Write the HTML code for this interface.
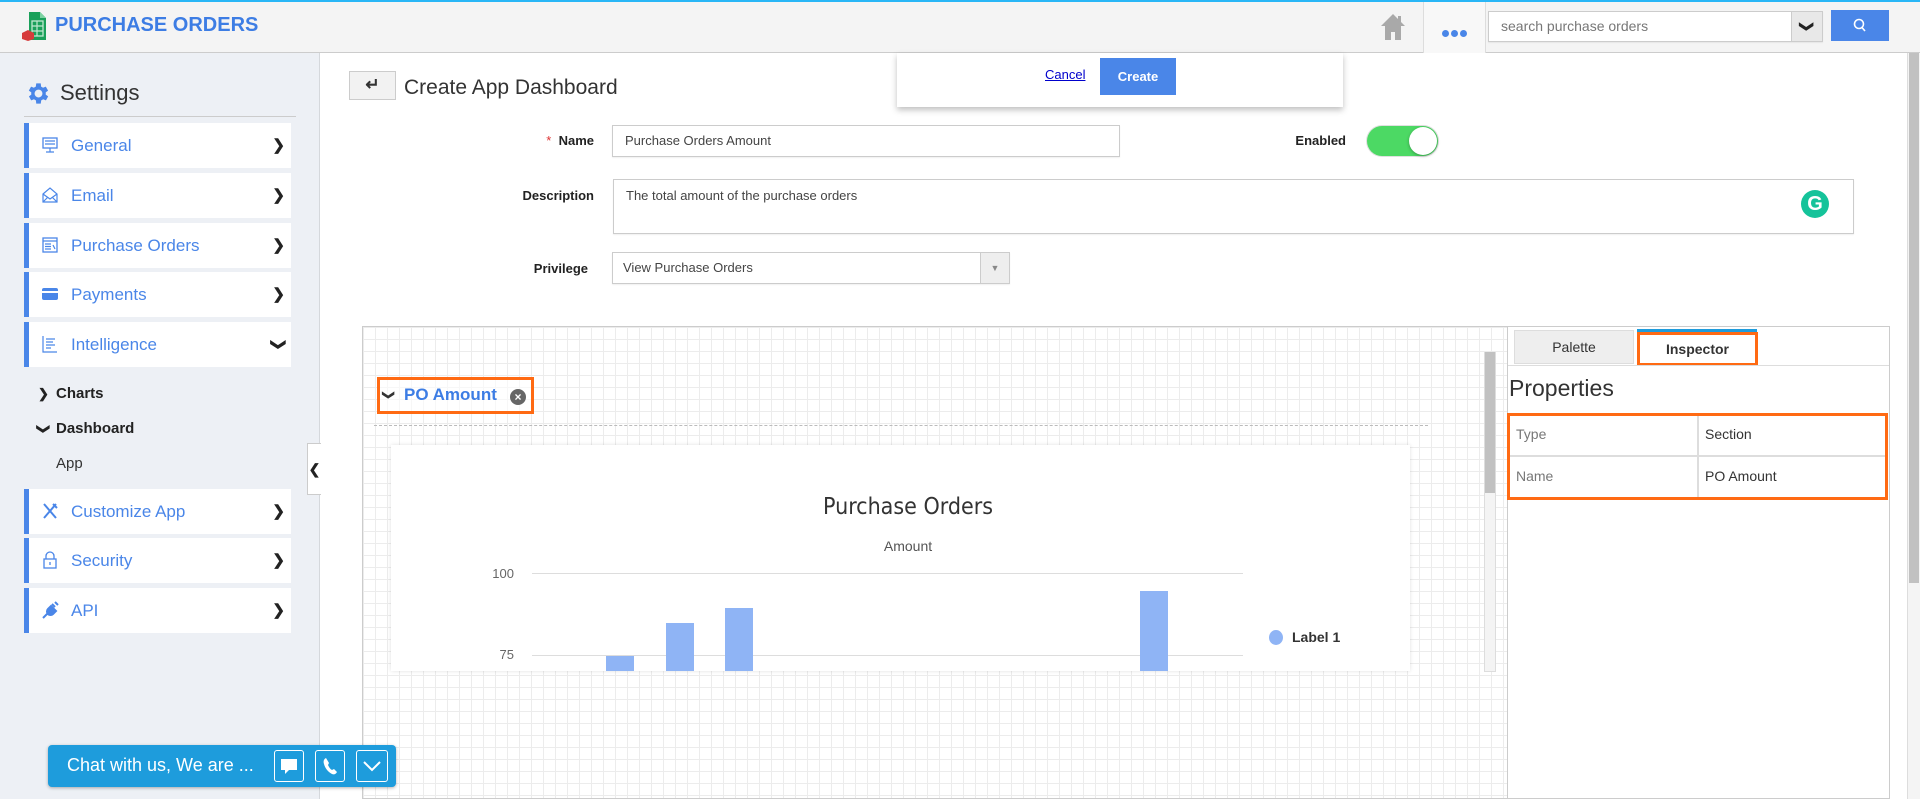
<!DOCTYPE html>
<html><head><meta charset="utf-8"><style>
*{box-sizing:border-box;margin:0;padding:0}
body{width:1920px;height:799px;overflow:hidden;font-family:"Liberation Sans",Arial,sans-serif;background:#fff;position:relative;color:#333}
.a{position:absolute}
.hdr{left:0;top:0;width:1920px;height:53px;background:#f4f4f4;border-top:2px solid #29b6f6;border-bottom:1px solid #ccc}
.side{left:0;top:53px;width:320px;height:746px;background:#edf0f5;border-right:1px solid #d5d8dc}
.mi{left:24px;width:267px;height:45px;background:#fff;border-left:5px solid #4a86e8;color:#4a86e8;font-size:17px;line-height:45px;padding-left:42px}
.mi .ic{position:absolute;left:12px;top:13px;width:18px;height:18px}
.mi .ch{position:absolute;right:6px;top:0;color:#222;font-size:15px;font-weight:bold}
.lbl{font-size:13px;font-weight:bold;color:#222;text-align:right}
.inp{border:1px solid #ccc;background:#fff;font-size:13px;color:#444;padding-left:12px;box-shadow:0 1px 1px rgba(0,0,0,.06)}
.grid{background-color:#fff;background-image:linear-gradient(#ececec 1px,transparent 1px),linear-gradient(90deg,#ececec 1px,transparent 1px);background-size:12px 12px}
.dn{display:inline-block;transform:rotate(90deg)}
</style></head><body>
<div class="a hdr">
 <svg class="a" style="left:20px;top:9px" width="28" height="30" viewBox="0 0 28 30"><path d="M9 1h11l6 6v22H9z" fill="#1aa05a"/><path d="M20 1v6h6" fill="#7ed3a3"/><rect x="12" y="10" width="11" height="15" fill="none" stroke="#bfe8cf" stroke-width="1.3"/><path d="M12 15h11M12 20h11M17 10v15" stroke="#bfe8cf" stroke-width="1.2"/><path d="M2 22l6-3 6 3v6l-6 2-6-2z" fill="#d63b3b"/></svg>
 <div class="a" style="left:55px;top:12px;font-size:20px;font-weight:bold;color:#3d7de4">PURCHASE ORDERS</div>
 <svg class="a" style="left:1380px;top:11px" width="26" height="28" viewBox="0 0 26 28"><path d="M13 1L1 13h4v14h6v-8h4v8h6V13h4z" fill="#a9a9a9"/><rect x="18" y="3" width="3" height="6" fill="#a9a9a9"/></svg>
 <div class="a" style="left:1423px;top:0;width:1px;height:51px;background:#ddd"></div>
 <div class="a" style="left:1424px;top:0;width:61px;height:51px;background:#f8f8f8"></div>
 <div class="a" style="left:1485px;top:0;width:1px;height:51px;background:#ddd"></div>
 <div class="a" style="left:1442px;top:22px"><span style="display:inline-block;width:7px;height:7px;border-radius:50%;background:#4a86e8;margin-right:2px"></span><span style="display:inline-block;width:7px;height:7px;border-radius:50%;background:#4a86e8;margin-right:2px"></span><span style="display:inline-block;width:7px;height:7px;border-radius:50%;background:#4a86e8"></span></div>
 <div class="a inp" style="left:1488px;top:9px;width:335px;height:31px;line-height:29px;color:#777;font-size:14px">search purchase orders</div>
 <div class="a" style="left:1791px;top:10px;width:31px;height:29px;background:#e8e8e8;border-left:1px solid #ccc;text-align:center;line-height:29px;font-size:14px;font-weight:bold;color:#222"><span class="dn">&#10095;</span></div>
 <div class="a" style="left:1831px;top:8px;width:58px;height:31px;background:#4a86e8"><svg style="margin:8px 0 0 22px" width="14" height="15" viewBox="0 0 14 15"><circle cx="6" cy="6" r="4.5" fill="none" stroke="#fff" stroke-width="1.6"/><path d="M9 9.5l3 3.5" stroke="#fff" stroke-width="1.6"/></svg></div>
</div>
<div class="a side">
 <svg class="a" style="left:25px;top:27px" width="27" height="27" viewBox="0 0 24 24"><path fill="#4a86e8" d="M19.4 13a7.5 7.5 0 000-2l2.1-1.6-2-3.5-2.5 1a7 7 0 00-1.7-1L15 3h-4l-.4 2.9a7 7 0 00-1.7 1l-2.5-1-2 3.5L6.6 11a7.5 7.5 0 000 2l-2.1 1.6 2 3.5 2.5-1a7 7 0 001.7 1L11 21h4l.4-2.9a7 7 0 001.7-1l2.5 1 2-3.5zM13 15.5a3.5 3.5 0 110-7 3.5 3.5 0 010 7z" transform="translate(-1 0)"/></svg>
 <div class="a" style="left:60px;top:27px;font-size:22px;color:#333">Settings</div>
 <div class="a" style="left:24px;top:63px;width:272px;height:1px;background:#ccc"></div>
</div>
<div class="a mi" style="top:123px"><svg class="ic" viewBox="0 0 18 18"><rect x="2" y="2" width="14" height="10" fill="none" stroke="#4a86e8" stroke-width="1.3"/><path d="M4 5h10M4 8h10M9 12v4M5 16h8" stroke="#4a86e8" stroke-width="1.2"/></svg>General<span class="ch">&#10095;</span></div>
<div class="a mi" style="top:173px"><svg class="ic" viewBox="0 0 18 18"><path d="M2 8l7-6 7 6v8H2z M2 8l7 5 7-5M2 16l5-5M16 16l-5-5" fill="none" stroke="#4a86e8" stroke-width="1.2"/></svg>Email<span class="ch">&#10095;</span></div>
<div class="a mi" style="top:223px"><svg class="ic" viewBox="0 0 18 18"><rect x="2" y="2" width="14" height="14" fill="none" stroke="#4a86e8" stroke-width="1.3"/><path d="M2 5h14M4 8h6M4 10.5h6M4 13h6M12 9l2 4" stroke="#4a86e8" stroke-width="1.2"/></svg>Purchase Orders<span class="ch">&#10095;</span></div>
<div class="a mi" style="top:272px"><svg class="ic" viewBox="0 0 18 18"><rect x="1" y="3" width="16" height="12" rx="2" fill="#4a86e8"/><rect x="1" y="6" width="16" height="2" fill="#fff"/></svg>Payments<span class="ch">&#10095;</span></div>
<div class="a mi" style="top:322px"><svg class="ic" viewBox="0 0 18 18"><path d="M2 1v16h14M5 4h9M5 7h7M5 10h9M5 13h5" fill="none" stroke="#4a86e8" stroke-width="1.2"/></svg>Intelligence<span class="ch"><span class="dn">&#10095;</span></span></div>
<div class="a" style="left:38px;top:386px;font-size:13px;font-weight:bold;color:#222">&#10095;</div>
<div class="a" style="left:56px;top:385px;font-size:15px;font-weight:bold;color:#222">Charts</div>
<div class="a" style="left:38px;top:421px;font-size:13px;font-weight:bold;color:#222"><span class="dn">&#10095;</span></div>
<div class="a" style="left:56px;top:420px;font-size:15px;font-weight:bold;color:#222">Dashboard</div>
<div class="a" style="left:56px;top:455px;font-size:15px;color:#333">App</div>
<div class="a mi" style="top:489px"><svg class="ic" viewBox="0 0 18 18"><path d="M3 2l12 14M15 2L3 16M12 2l4 4" fill="none" stroke="#4a86e8" stroke-width="2"/></svg>Customize App<span class="ch">&#10095;</span></div>
<div class="a mi" style="top:538px"><svg class="ic" viewBox="0 0 18 18"><rect x="3" y="8" width="12" height="9" fill="none" stroke="#4a86e8" stroke-width="1.3"/><path d="M5 8V5a4 4 0 018 0v3M9 11v3" fill="none" stroke="#4a86e8" stroke-width="1.3"/></svg>Security<span class="ch">&#10095;</span></div>
<div class="a mi" style="top:588px"><svg class="ic" viewBox="0 0 18 18"><path d="M2 17l4-4M7 8l3-3 5 5-3 3a3 3 0 01-5-5zM11 3l3 3M14 1l3 3" fill="#4a86e8" stroke="#4a86e8" stroke-width="2"/></svg>API<span class="ch">&#10095;</span></div>
<div class="a" style="left:307px;top:443px;width:14px;height:52px;background:#fff;border:1px solid #ccc;border-right:none;font-size:14px;font-weight:bold;line-height:50px;text-align:center;color:#222">&#10094;</div>
<!-- main -->
<div class="a" style="left:349px;top:71px;width:47px;height:29px;background:#f2f2f2;border:1px solid #ccc;text-align:center;line-height:26px;font-size:17px;font-weight:bold">&#8629;</div>
<div class="a" style="left:404px;top:76px;font-size:21px;color:#333">Create App Dashboard</div>
<div class="a" style="left:897px;top:53px;width:446px;height:54px;background:#fff;box-shadow:0 3px 6px rgba(0,0,0,.25)"></div>
<div class="a" style="left:1045px;top:67px;font-size:13px;color:#00c;text-decoration:underline">Cancel</div>
<div class="a" style="left:1100px;top:58px;width:76px;height:37px;background:#4a86e8;color:#fff;font-weight:bold;font-size:13px;text-align:center;line-height:37px">Create</div>
<div class="a lbl" style="left:500px;top:133px;width:94px"><span style="color:#d33;font-weight:normal">*</span>&nbsp; Name</div>
<div class="a inp" style="left:612px;top:125px;width:508px;height:32px;line-height:30px">Purchase Orders Amount</div>
<div class="a lbl" style="left:1280px;top:133px;width:66px">Enabled</div>
<div class="a" style="left:1367px;top:126px;width:71px;height:30px;border-radius:15px;background:#4cd964;box-shadow:0 0 0 1px #e0e0e0"></div>
<div class="a" style="left:1409px;top:127px;width:28px;height:28px;border-radius:50%;background:#fff;box-shadow:0 1px 3px rgba(0,0,0,.3)"></div>
<div class="a lbl" style="left:480px;top:188px;width:114px">Description</div>
<div class="a inp" style="left:613px;top:179px;width:1241px;height:55px;padding-top:8px">The total amount of the purchase orders</div>
<div class="a" style="left:1801px;top:190px;width:28px;height:28px;border-radius:50%;background:#15c39a;color:#fff;font-weight:bold;font-size:20px;text-align:center;line-height:28px">G</div>
<div class="a lbl" style="left:480px;top:261px;width:108px">Privilege</div>
<div class="a inp" style="left:612px;top:252px;width:398px;height:32px;line-height:30px;padding-left:10px">View Purchase Orders</div>
<div class="a" style="left:980px;top:253px;width:29px;height:30px;background:#eee;border-left:1px solid #ccc;color:#888;font-size:9px;text-align:center;line-height:30px">&#9660;</div>
<!-- canvas -->
<div class="a grid" style="left:362px;top:326px;width:1145px;height:473px;border:1px solid #ccc;border-right:none"></div>
<div class="a" style="left:377px;top:377px;width:157px;height:37px;border:3px solid #ff6a13;background:rgba(255,255,255,.6)"></div>
<div class="a" style="left:384px;top:388px;font-size:12px;font-weight:bold;color:#333"><span class="dn">&#10095;</span></div>
<div class="a" style="left:404px;top:385px;font-size:17px;font-weight:bold;color:#3d7de4">PO Amount</div>
<div class="a" style="left:510px;top:389px;width:16px;height:16px;border-radius:50%;background:#666;color:#fff;font-size:12px;font-weight:bold;text-align:center;line-height:16px">×</div>
<div class="a" style="left:374px;top:425px;width:1054px;border-top:1px dashed #bbb"></div>
<div class="a" style="left:391px;top:445px;width:1019px;height:226px;background:#fff;box-shadow:0 0 4px rgba(0,0,0,.12)"></div>
<div class="a" style="left:391px;top:494px;width:1034px;text-align:center;font-size:23px;color:#333;font-family:'DejaVu Sans Condensed','Liberation Sans',sans-serif;font-weight:300">Purchase Orders</div>
<div class="a" style="left:391px;top:538px;width:1034px;text-align:center;font-size:14px;color:#555">Amount</div>
<div class="a" style="left:480px;top:566px;width:34px;text-align:right;font-size:13px;color:#666">100</div>
<div class="a" style="left:480px;top:647px;width:34px;text-align:right;font-size:13px;color:#666">75</div>
<div class="a" style="left:532px;top:573px;width:711px;height:1px;background:#ddd"></div>
<div class="a" style="left:532px;top:655px;width:711px;height:1px;background:#ddd"></div>
<div class="a" style="left:606px;top:656px;width:28px;height:15px;background:#8fb4f5"></div>
<div class="a" style="left:666px;top:623px;width:28px;height:48px;background:#8fb4f5"></div>
<div class="a" style="left:725px;top:608px;width:28px;height:63px;background:#8fb4f5"></div>
<div class="a" style="left:1140px;top:591px;width:28px;height:80px;background:#8fb4f5"></div>
<div class="a" style="left:1269px;top:630px;width:14px;height:15px;border-radius:50%;background:#8fb4f5"></div>
<div class="a" style="left:1292px;top:629px;font-size:14px;font-weight:bold;color:#333">Label 1</div>
<div class="a" style="left:1484px;top:352px;width:12px;height:320px;background:#f4f4f4;border:1px solid #ddd"></div>
<div class="a" style="left:1485px;top:352px;width:10px;height:141px;background:#c1c1c1"></div>
<!-- right panel -->
<div class="a" style="left:1507px;top:326px;width:383px;height:473px;background:#fff;border:1px solid #ccc"></div>
<div class="a" style="left:1514px;top:330px;width:120px;height:34px;background:#eee;border:1px solid #ddd;text-align:center;line-height:32px;font-size:14px">Palette</div>
<div class="a" style="left:1637px;top:329px;width:120px;height:4px;background:#1e9cdc"></div>
<div class="a" style="left:1637px;top:332px;width:121px;height:34px;border:3px solid #ff6a13;background:#fff;text-align:center;line-height:28px;font-size:14px;font-weight:bold">Inspector</div>
<div class="a" style="left:1508px;top:365px;width:381px;height:1px;background:#ddd"></div>
<div class="a" style="left:1509px;top:375px;font-size:23px;color:#333">Properties</div>
<div class="a" style="left:1507px;top:413px;width:381px;height:87px;border:3px solid #ff6a13;background:#fff"></div>
<div class="a" style="left:1510px;top:455px;width:375px;height:2px;background:#ddd"></div>
<div class="a" style="left:1697px;top:416px;width:2px;height:81px;background:#ddd"></div>
<div class="a" style="left:1516px;top:426px;font-size:14px;color:#777">Type</div>
<div class="a" style="left:1705px;top:426px;font-size:14px;color:#333">Section</div>
<div class="a" style="left:1516px;top:468px;font-size:14px;color:#777">Name</div>
<div class="a" style="left:1705px;top:468px;font-size:14px;color:#333">PO Amount</div>
<!-- page scrollbar -->
<div class="a" style="left:1907px;top:53px;width:13px;height:746px;background:#f4f4f4;border-left:1px solid #ddd"></div>
<div class="a" style="left:1909px;top:53px;width:10px;height:530px;background:#c1c1c1"></div>
<!-- chat -->
<div class="a" style="left:48px;top:745px;width:348px;height:42px;background:#1e9cdc;border-radius:4px;box-shadow:0 1px 3px rgba(0,0,0,.3)"></div>
<div class="a" style="left:67px;top:755px;font-size:18px;color:#fff">Chat with us, We are ...</div>
<div class="a" style="left:274px;top:750px;width:30px;height:32px;border:1px solid #fff;border-radius:3px"><svg width="28" height="30" viewBox="0 0 28 30"><path d="M6 8h16v11h-8l-4 4v-4H6z" fill="#fff"/></svg></div>
<div class="a" style="left:315px;top:750px;width:30px;height:32px;border:1px solid #fff;border-radius:3px"><svg width="28" height="30" viewBox="0 0 28 30"><path d="M10 7c-2 1-3 3-2 6 1 4 4 8 8 10 2 1 4 0 5-2l-3-3-2 1c-2-1-3-3-4-5l1-2z" fill="#fff"/></svg></div>
<div class="a" style="left:356px;top:750px;width:32px;height:32px;border:1px solid #fff;border-radius:3px"><svg width="30" height="30" viewBox="0 0 30 30"><path d="M7 11l8 8 8-8" fill="none" stroke="#fff" stroke-width="2"/></svg></div>
</body></html>
